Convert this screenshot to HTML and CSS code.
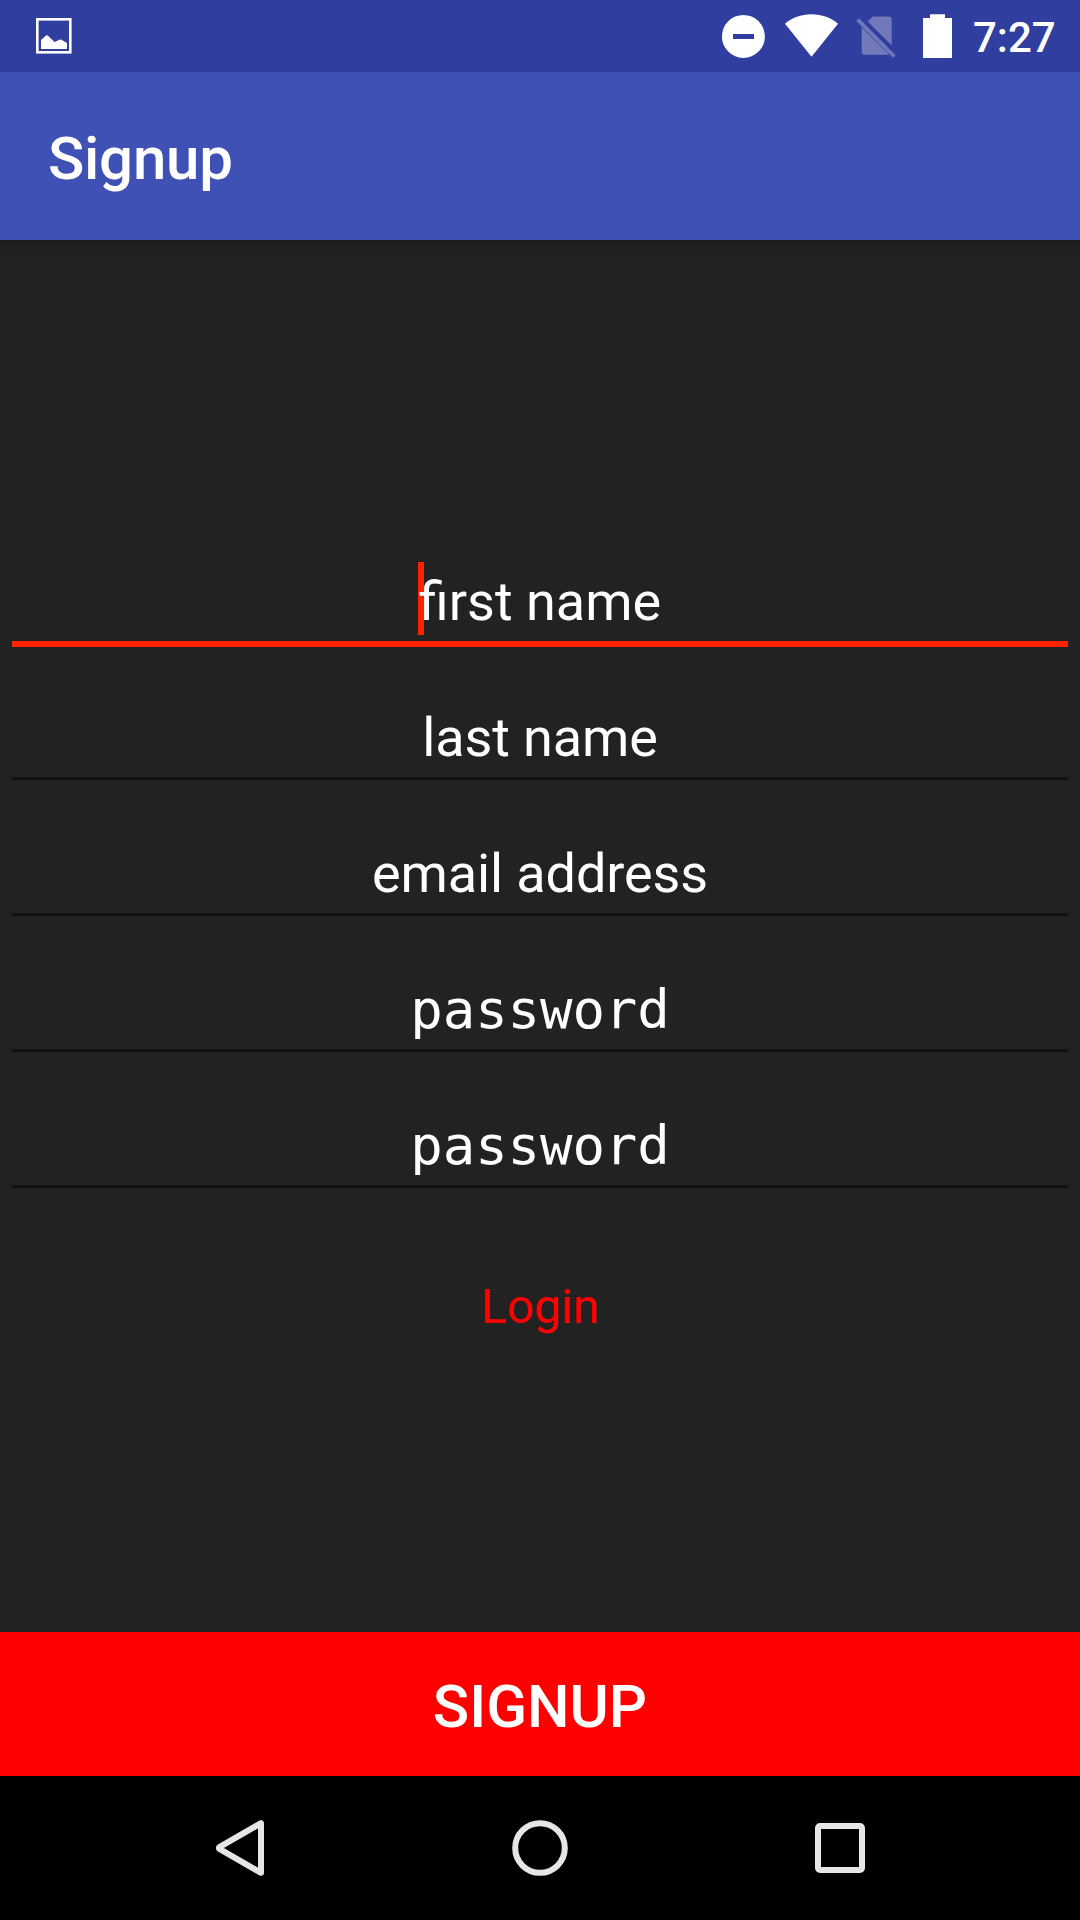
FILE: index.html
```html
<!DOCTYPE html>
<html lang="en">
<head>
<meta charset="utf-8">
<title>Signup</title>
<link rel="stylesheet" href="styles.css">
</head>
<body>
<div class="screen">
  <header class="status-bar">
    <svg class="icon" width="36" height="72" viewBox="36 0 36 72">
      <rect x="37.3" y="19.3" width="33" height="33" fill="none" stroke="#fff" stroke-width="2.6"/>
      <path d="M41 49V40L46 35.5Q47 34.8 48 35.7L54.5 42L59.5 39.7Q60.5 39.3 61.5 39.8L67 43V49Z" fill="#fff"/>
    </svg>
    <div class="status-right">
      <svg class="icon" width="260" height="72" viewBox="700 0 260 72">
        <path fill="#fff" fill-rule="evenodd" d="M743.4 14.9a21.5 21.5 0 1 1 0 43a21.5 21.5 0 0 1 0-43ZM733 34V39H754V34Z"/>
        <path fill="#fff" d="M811.5 56.7L785 23.7C792 17.7 801 14.2 811.5 14.2S831 17.7 838 23.7Z"/>
        <g fill="#7179bb">
          <path d="M873 16.4H888.5Q891.7 16.4 891.7 19.6V45.5L867.6 21.4Z"/>
          <path d="M861.7 27L889 54.2Q888.7 54.8 887.5 54.8H865.3Q861.7 54.8 861.7 51.4Z"/>
          <path d="M859 18.3L895.6 55.2L893.2 57.8L856.4 21Z"/>
        </g>
        <path fill="#fff" d="M930 14.2H945V18H952V58H923V18H930Z"/>
      </svg>
      <span class="clock">7:27</span>
    </div>
  </header>
  <div class="app-bar"><h1 class="title">Signup</h1></div>
  <main class="content">
    <form class="form">
      <div class="field active"><span class="hint"><i class="caret"></i>first name</span></div>
      <div class="field"><span class="hint">last name</span></div>
      <div class="field"><span class="hint">email address</span></div>
      <div class="field"><span class="hint mono">password</span></div>
      <div class="field"><span class="hint mono">password</span></div>
    </form>
    <a class="login">Login</a>
  </main>
  <div class="signup">SIGNUP</div>
  <nav class="nav-bar">
    <svg class="icon" width="60" height="60" viewBox="0 0 60 60"><path d="M51 5.2V54.8L9.4 30.9Q8.4 30 9.4 29.1Z" class="nav-shape"/></svg>
    <svg class="icon" width="60" height="60" viewBox="0 0 60 60"><circle cx="30" cy="30" r="24.8" class="nav-shape"/></svg>
    <svg class="icon" width="60" height="60" viewBox="0 0 60 60"><rect x="8" y="8" width="44" height="44" rx="2" class="nav-shape"/></svg>
  </nav>
</div>
</body>
</html>
```
FILE: styles.css
```css
* { box-sizing: border-box; }
body { margin: 0; background: #000; }
.screen {
  width: 1080px;
  height: 1920px;
  display: flex;
  flex-direction: column;
  overflow: hidden;
  background: #222;
  color: #fff;
  font-family: Roboto, sans-serif;
}
.icon { display: block; flex: none; }
.status-bar {
  height: 72px;
  flex: none;
  display: flex;
  justify-content: space-between;
  padding: 0 25px 0 36px;
  background: #303f9f;
}
.status-right { display: flex; }
.clock {
  width: 82px;
  margin-left: 13px;
  font-size: 42px;
  font-weight: 500;
  line-height: 76px;
  white-space: nowrap;
}
.app-bar {
  height: 168px;
  flex: none;
  padding: 5px 48px 0;
  background: #3f51b5;
  box-shadow: 0 4px 10px rgba(0, 0, 0, .25);
  clip-path: inset(0 0 -20px 0);
}
.title { margin: 0; font-size: 60px; font-weight: 500; line-height: 163px; letter-spacing: -.25px; }
.content {
  flex: 1;
  display: flex;
  flex-direction: column;
  align-items: center;
  padding: 268px 12px 0;
}
.form { width: 100%; }
.field {
  height: 136px;
  padding-top: 54px;
  border-bottom: 3px solid #111;
  text-align: center;
  font-size: 54px;
  line-height: 79px;
  letter-spacing: -.1px;
}
.field.active { height: 139px; margin-bottom: -3px; border-bottom: 6px solid #ff2200; }
.hint { position: relative; display: inline-block; height: 79px; vertical-align: top; }
.caret {
  position: absolute;
  z-index: -1;
  left: -1px;
  top: 0;
  width: 6px;
  height: 73px;
  background: #ff2200;
}
.field.active { letter-spacing: normal; }
.field.active .hint { z-index: 0; }
.mono { font-family: "Droid Sans Mono", "DejaVu Sans Mono", monospace; }
.login { margin-top: 90px; font-size: 48px; line-height: 57px; color: #f00; }
.signup {
  height: 144px;
  flex: none;
  padding-top: 5px;
  background: #f00;
  text-align: center;
  font-size: 60px;
  font-weight: 500;
  line-height: 139px;
}
.nav-bar {
  height: 144px;
  flex: none;
  display: flex;
  align-items: center;
  justify-content: center;
  gap: 240px;
  background: #000;
}
.nav-shape { fill: none; stroke: #e6e6e6; stroke-width: 6; stroke-linejoin: round; }
```
